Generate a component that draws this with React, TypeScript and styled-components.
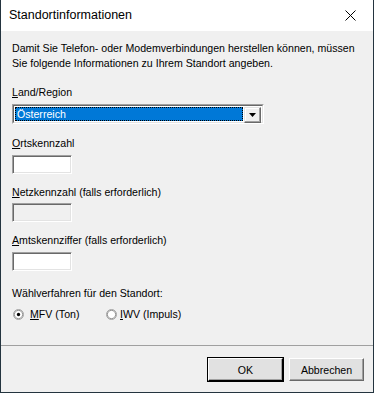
import React from "react";
import styled, { createGlobalStyle } from "styled-components";

const Global = createGlobalStyle`
  html, body { margin: 0; padding: 0; }
  body {
    background: #24343f;
    width: 374px;
    height: 393px;
    overflow: hidden;
  }
`;

const Window = styled.div`
  box-sizing: border-box;
  width: 372px;
  height: 392px;
  margin-left: 1px;
  background: #f0f0f0;
  display: flex;
  flex-direction: column;
  font-family: "Liberation Sans", Arial, sans-serif;
  font-size: 10.6px;
  color: #000;
`;

const TitleBar = styled.div`
  height: 31px;
  flex: 0 0 31px;
  background: #fff;
  display: flex;
  align-items: center;
  justify-content: space-between;
  padding-left: 8px;
`;

const Title = styled.span`
  font-family: "Liberation Sans", Arial, sans-serif;
  font-size: 12.5px;
  color: #000;
  margin-top: -1px;
`;

const CloseBox = styled.div`
  width: 46px;
  height: 31px;
  display: flex;
  align-items: center;
  justify-content: center;
  margin-top: -1px;
`;

const Body = styled.div`
  flex: 1;
  display: flex;
  flex-direction: column;
  padding: 10px 10px 0 11px;
`;

const Para = styled.p`
  margin: 0;
  line-height: 14.5px;
  white-space: nowrap;
`;

const Label = styled.div<{ $mt: number; $mb: number }>`
  line-height: 14px;
  height: 14px;
  white-space: nowrap;
  margin-top: ${(p) => p.$mt}px;
  margin-bottom: ${(p) => p.$mb}px;
`;

const U = styled.span`
  text-decoration: underline;
  text-underline-offset: 1px;
`;

const SelectBox = styled.div`
  box-sizing: border-box;
  width: 252px;
  height: 20px;
  border-style: solid;
  border-width: 1px;
  border-color: #a0a0a0 #fff #fff #a0a0a0;
  display: flex;
`;

const SelectInner = styled.div`
  flex: 1;
  box-sizing: border-box;
  border-style: solid;
  border-width: 1px;
  border-color: #696969 #e3e3e3 #e3e3e3 #696969;
  background: #fff;
  display: flex;
  padding: 1px;
`;

const Selected = styled.div`
  flex: 1;
  box-sizing: border-box;
  background: #0078d7;
  color: #fff;
  outline: 1px dotted #000;
  outline-offset: -1px;
  padding-left: 2px;
  line-height: 14px;
`;

const DropButton = styled.div`
  box-sizing: border-box;
  width: 17px;
  height: 16px;
  margin-left: 1px;
  border-style: solid;
  border-width: 1px;
  border-color: #e3e3e3 #696969 #696969 #e3e3e3;
  box-shadow: inset -1px -1px 0 #a0a0a0, inset 1px 1px 0 #fff;
  background: #f0f0f0;
  display: flex;
  align-items: center;
  justify-content: center;
`;

const TextField = styled.div<{ $disabled?: boolean }>`
  box-sizing: border-box;
  width: 60px;
  height: 19px;
  border-style: solid;
  border-width: 1px;
  border-color: #a0a0a0 #fff #fff #a0a0a0;
  box-shadow: inset 1px 1px 0 #696969, inset -1px -1px 0 #e3e3e3;
  background: ${(p) => (p.$disabled ? "#f0f0f0" : "#fff")};
`;

const RadioRow = styled.div`
  display: flex;
  align-items: center;
  margin-top: 7px;
  height: 14px;
  padding-left: 1px;
`;

const RadioItem = styled.label<{ $w: number; $gap: number }>`
  display: flex;
  align-items: center;
  width: ${(p) => p.$w}px;
  gap: ${(p) => p.$gap}px;
  line-height: 14px;
  white-space: nowrap;
`;

const Footer = styled.div`
  flex: 0 0 auto;
  border-top: 1px solid #a0a0a0;
  height: 47px;
  box-sizing: border-box;
  display: flex;
  justify-content: flex-end;
  align-items: flex-start;
  padding: 12px 9px 0 0;
  gap: 6px;
`;

const Button = styled.div<{ $default?: boolean }>`
  box-sizing: border-box;
  width: 75px;
  height: 23px;
  background: #e1e1e1;
  border: 1px solid;
  border-color: ${(p) =>
    p.$default ? "#fff #000 #000 #fff" : "#fff #696969 #696969 #fff"};
  box-shadow: ${(p) =>
    p.$default
      ? "0 0 0 1px #000, inset -1px -1px 0 #a0a0a0"
      : "inset -1px -1px 0 #a0a0a0"};
  display: flex;
  align-items: center;
  justify-content: center;
  line-height: 14px;
`;

const Radio = ({ checked }: { checked?: boolean }) => (
  <svg width="11" height="11" viewBox="0 0 12 12">
    <circle cx="6" cy="6" r="5.5" fill="#fff" stroke="#a0a0a0" />
    <circle cx="6" cy="6" r="4.5" fill="#fff" stroke="#696969" strokeWidth="0.8" />
    {checked && <circle cx="6" cy="6" r="1.8" fill="#000" />}
  </svg>
);

export default function App() {
  return (
    <>
      <Global />
      <Window>
        <TitleBar>
          <Title>Standortinformationen</Title>
          <CloseBox>
            <svg width="11" height="11" viewBox="0 0 11 11">
              <path d="M0.5 0.5 L10.5 10.5 M10.5 0.5 L0.5 10.5" stroke="#000" strokeWidth="1" />
            </svg>
          </CloseBox>
        </TitleBar>
        <Body>
          <Para>
            Damit Sie Telefon- oder Modemverbindungen herstellen können, müssen
            <br />
            Sie folgende Informationen zu Ihrem Standort angeben.
          </Para>
          <Label $mt={15} $mb={5}>
            <U>L</U>and/Region
          </Label>
          <SelectBox>
            <SelectInner>
              <Selected>Österreich</Selected>
              <DropButton>
                <svg width="7" height="4" viewBox="0 0 7 4">
                  <path d="M0 0 H7 L3.5 4 Z" fill="#000" />
                </svg>
              </DropButton>
            </SelectInner>
          </SelectBox>
          <Label $mt={12} $mb={5}>
            <U>O</U>rtskennzahl
          </Label>
          <TextField />
          <Label $mt={11} $mb={4}>
            <U>N</U>etzkennzahl (falls erforderlich)
          </Label>
          <TextField $disabled />
          <Label $mt={11} $mb={5}>
            <U>A</U>mtskennziffer (falls erforderlich)
          </Label>
          <TextField />
          <Label $mt={15} $mb={0}>
            Wählverfahren für den Standort:
          </Label>
          <RadioRow>
            <RadioItem $w={93} $gap={6}>
              <Radio checked />
              <span>
                <U>M</U>FV (Ton)
              </span>
            </RadioItem>
            <RadioItem $w={120} $gap={3}>
              <Radio />
              <span>
                <U>I</U>WV (Impuls)
              </span>
            </RadioItem>
          </RadioRow>
        </Body>
        <Footer>
          <Button $default>OK</Button>
          <Button>Abbrechen</Button>
        </Footer>
      </Window>
    </>
  );
}
